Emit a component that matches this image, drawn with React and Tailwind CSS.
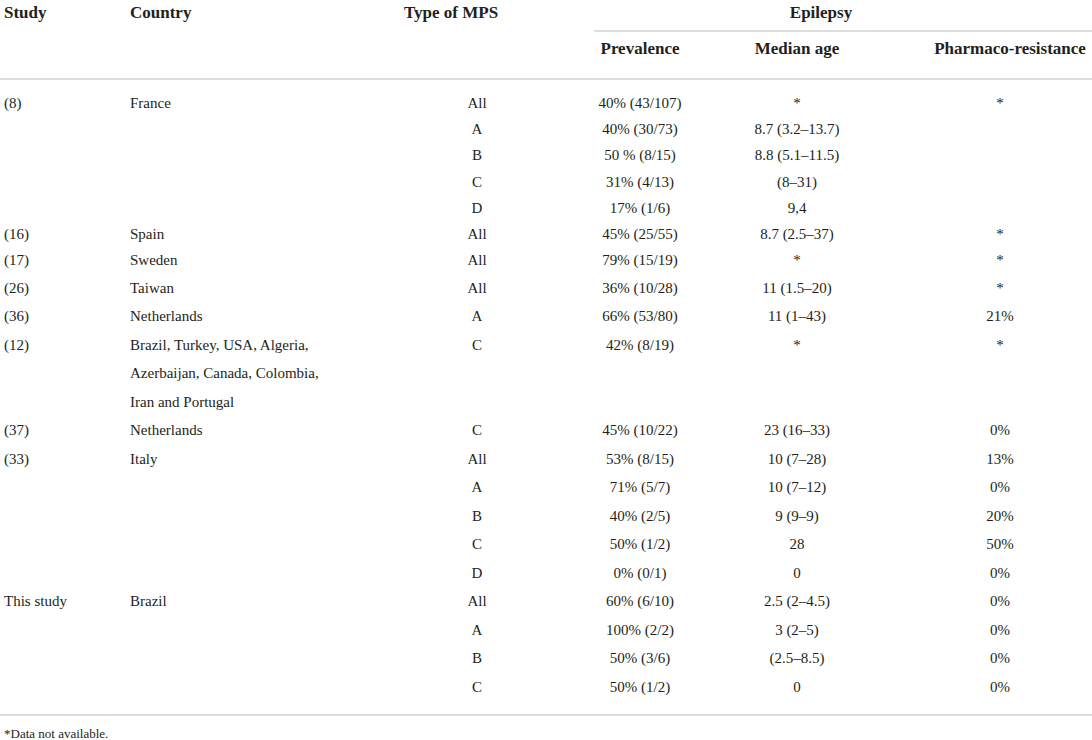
import React from "react";

const groupA = [
  ["(8)", "France", "All", "40% (43/107)", "*", "*"],
  ["", "", "A", "40% (30/73)", "8.7 (3.2–13.7)", ""],
  ["", "", "B", "50 % (8/15)", "8.8 (5.1–11.5)", ""],
  ["", "", "C", "31% (4/13)", "(8–31)", ""],
  ["", "", "D", "17% (1/6)", "9,4", ""],
  ["(16)", "Spain", "All", "45% (25/55)", "8.7 (2.5–37)", "*"],
  ["(17)", "Sweden", "All", "79% (15/19)", "*", "*"],
];

const groupB = [
  ["(26)", "Taiwan", "All", "36% (10/28)", "11 (1.5–20)", "*"],
  ["(36)", "Netherlands", "A", "66% (53/80)", "11 (1–43)", "21%"],
  ["(12)", "Brazil, Turkey, USA, Algeria,", "C", "42% (8/19)", "*", "*"],
  ["", "Azerbaijan, Canada, Colombia,", "", "", "", ""],
  ["", "Iran and Portugal", "", "", "", ""],
  ["(37)", "Netherlands", "C", "45% (10/22)", "23 (16–33)", "0%"],
  ["(33)", "Italy", "All", "53% (8/15)", "10 (7–28)", "13%"],
  ["", "", "A", "71% (5/7)", "10 (7–12)", "0%"],
  ["", "", "B", "40% (2/5)", "9 (9–9)", "20%"],
  ["", "", "C", "50% (1/2)", "28", "50%"],
  ["", "", "D", "0% (0/1)", "0", "0%"],
  ["This study", "Brazil", "All", "60% (6/10)", "2.5 (2–4.5)", "0%"],
  ["", "", "A", "100% (2/2)", "3 (2–5)", "0%"],
  ["", "", "B", "50% (3/6)", "(2.5–8.5)", "0%"],
  ["", "", "C", "50% (1/2)", "0", "0%"],
];

function Row({ r, tall }) {
  return (
    <div className={`flex items-center ${tall ? "h-[28.5px]" : "h-[26.3px]"}`}>
      <div className="w-[130px] pl-[4px]">{r[0]}</div>
      <div className="w-[274px]">{r[1]}</div>
      <div className="w-[146px] text-center">{r[2]}</div>
      <div className="w-[180px] text-center">{r[3]}</div>
      <div className="w-[134px] text-center">{r[4]}</div>
      <div className="w-[228px] pl-[44px] text-center">{r[5]}</div>
    </div>
  );
}

export default function App() {
  return (
    <div
      className="w-[1092px] h-[740px] bg-white text-[#231f20] text-[15px] leading-none"
      style={{ fontFamily: '"Liberation Serif", "DejaVu Serif", serif' }}
    >
      {/* Header */}
      <div className="flex font-bold text-[17px]">
        <div className="w-[130px] pl-[4px] pt-[4px]">Study</div>
        <div className="w-[274px] pt-[4px]">Country</div>
        <div className="w-[146px] pt-[4px]">Type of MPS</div>
        <div className="flex-1 flex flex-col">
          <div className="h-[30px] pt-[4px] text-center">Epilepsy</div>
          <div className="ml-[44px] h-[2px] bg-[#dcdcdc]"></div>
          <div className="flex h-[46px] items-start pt-[8px]">
            <div className="w-[180px] text-center">Prevalence</div>
            <div className="w-[134px] text-center">Median age</div>
            <div className="w-[228px] pl-[64px] text-center">Pharmaco-resistance</div>
          </div>
        </div>
      </div>
      <div className="h-[2px] bg-[#dcdcdc]"></div>

      {/* Body */}
      <div className="pt-[10px] pb-[12px]">
        {groupA.map((r, i) => (
          <Row key={"a" + i} r={r} />
        ))}
        {groupB.map((r, i) => (
          <Row key={"b" + i} r={r} tall />
        ))}
      </div>
      <div className="h-[2px] bg-[#dcdcdc]"></div>
      <div className="pt-[11px] pl-[4px] text-[13px]">*Data not available.</div>
    </div>
  );
}
